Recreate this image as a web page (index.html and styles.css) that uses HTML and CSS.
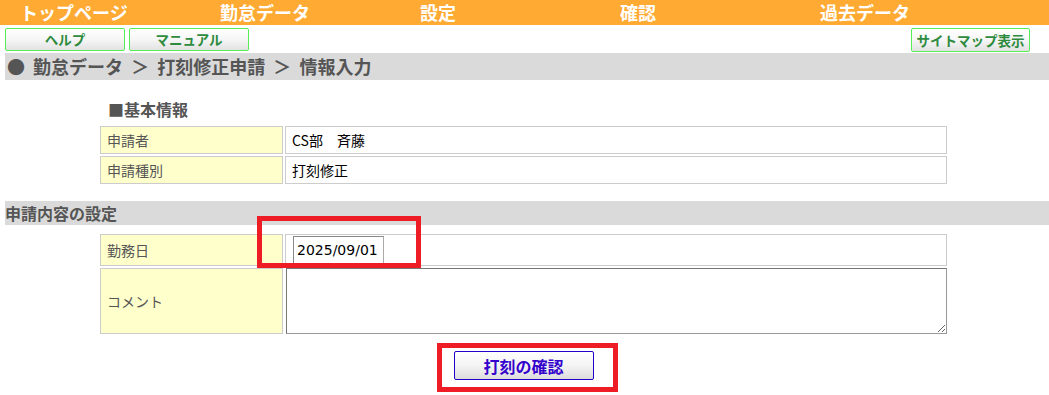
FILE: index.html
```html
<!DOCTYPE html>
<html lang="ja">
<head>
<meta charset="utf-8">
<link rel="stylesheet" href="styles.css">
</head>
<body>
<nav class="gnav">
  <div class="gnav-item">トップページ</div>
  <div class="gnav-item">勤怠データ</div>
  <div class="gnav-item">設定</div>
  <div class="gnav-item">確認</div>
  <div class="gnav-item">過去データ</div>
</nav>
<div class="toolbar">
  <div class="tool-left">
    <button class="gbtn">ヘルプ</button>
    <button class="gbtn">マニュアル</button>
  </div>
  <button class="gbtn">サイトマップ表示</button>
</div>
<div class="crumb">● 勤怠データ ＞ 打刻修正申請 ＞ 情報入力</div>

<h3 class="subhead">■基本情報</h3>
<div class="form">
  <div class="row r28">
    <div class="lbl">申請者</div>
    <div class="val">CS部　斉藤</div>
  </div>
  <div class="row r28">
    <div class="lbl">申請種別</div>
    <div class="val">打刻修正</div>
  </div>
</div>

<div class="section">申請内容の設定</div>
<div class="form">
  <div class="row r32">
    <div class="lbl">勤務日</div>
    <div class="val val-input"><input class="date" type="text" value="2025/09/01"></div>
  </div>
  <div class="row r67">
    <div class="lbl">コメント</div>
    <div class="val val-area"><textarea class="comment"></textarea></div>
  </div>
</div>
<div class="actions">
  <button class="cbtn">打刻の確認</button>
</div>

<div class="mark mark-date"></div>
<div class="mark mark-btn"></div>
</body>
</html>
```

FILE: styles.css
```css
* { box-sizing: border-box; }
body {
  margin: 0;
  font-family: "Noto Sans CJK JP", "Liberation Sans", sans-serif;
  background: #fff;
  position: relative;
  width: 1049px;
  height: 395px;
  overflow: hidden;
}
.gnav {
  display: flex;
  height: 25px;
  background: #ffaa33;
}
.gnav-item {
  width: 200px;
  padding-left: 20px;
  color: #fff;
  font-weight: bold;
  font-size: 18px;
  line-height: 25px;
  white-space: nowrap;
}
.toolbar {
  display: flex;
  justify-content: space-between;
  padding: 3px 19px 0 5px;
  height: 53px;
}
.tool-left { display: flex; gap: 4px; }
.gbtn {
  height: 23px;
  width: 120px;
  padding: 0;
  border: 1px solid #55ee55;
  border-radius: 2px;
  background: linear-gradient(#ffffff 0%, #f6f6f6 50%, #e2e2e2 100%);
  color: #2e8b3e;
  font-family: inherit;
  font-size: 13.5px;
  font-weight: bold;
  line-height: 21px;
}
.toolbar > .gbtn { width: 119px; height: 24px; }
.crumb {
  margin-top: -25px;
  margin-left: 5px;
  height: 27px;
  background: #dadada;
  color: #555;
  font-weight: bold;
  font-size: 18px;
  line-height: 27px;
  padding-left: 2px;
  word-spacing: 4px;
  white-space: nowrap;
}
.subhead {
  margin: 18px 0 0 108px;
  height: 28px;
  font-size: 16px;
  line-height: 22px;
  color: #555;
  font-weight: bold;
}
.form {
  margin-left: 100px;
  width: 847px;
  display: flex;
  flex-direction: column;
  gap: 2px;
}
.row { display: flex; gap: 2px; }
.r28 { height: 28px; }
.r32 { height: 32px; }
.r67 { height: 66px; }
.lbl {
  width: 183px;
  background: #ffffcc;
  border: 1px solid #cccccc;
  color: #555;
  font-size: 14px;
  display: flex;
  align-items: center;
  padding-left: 6px;
}
.val {
  flex: 1;
  border: 1px solid #cccccc;
  color: #000;
  font-size: 14px;
  display: flex;
  align-items: center;
  padding-left: 6px;
}
.val-input { padding-left: 7px; align-items: flex-start; padding-top: 1px; }
.date {
  width: 91px;
  height: 28px;
  border: 1px solid #888;
  border-right-color: #aaa;
  border-bottom-color: #ccc;
  font-family: "DejaVu Sans", sans-serif;
  font-size: 14px;
  padding: 0 0 0 3px;
  margin: 0;
  color: #000;
}
.val-area { padding: 0 0 0 1px; align-items: stretch; border: none; }
.comment {
  width: 100%;
  height: 100%;
  border: 1px solid #777;
  border-right-color: #999;
  border-bottom-color: #999;
  margin: 0;
  resize: both;
}
.section {
  margin: 17px 0 9px 5px;
  height: 24px;
  background: #dadada;
  color: #555;
  font-size: 16px;
  font-weight: bold;
  line-height: 24px;
}
.actions {
  display: flex;
  justify-content: center;
  padding: 17px 0 0 0;
  margin-left: -2px;
}
.cbtn {
  width: 140px;
  height: 29px;
  border: 1px solid #2200cc;
  border-radius: 2px;
  background: linear-gradient(#ffffff 0%, #f4f4f4 50%, #dcdcdc 100%);
  color: #3300cc;
  font-family: inherit;
  font-size: 16px;
  font-weight: bold;
  padding: 0;
}
.mark {
  position: absolute;
  border: 5px solid #ee1c25;
}
.mark-date { left: 257px; top: 216px; width: 164px; height: 52px; }
.mark-btn { left: 437px; top: 343px; width: 181px; height: 49px; }
```
